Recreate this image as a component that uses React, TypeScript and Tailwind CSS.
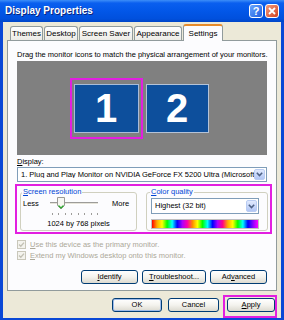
import React from "react";

const tabs = [
  { label: "Themes", w: "w-[33px]" },
  { label: "Desktop", w: "w-[34px]" },
  { label: "Screen Saver", w: "w-[54px]" },
  { label: "Appearance", w: "w-[48px]" },
];

function ComboArrow() {
  return (
    <div className="flex h-full w-[11px] shrink-0 items-center justify-center rounded-[2px] border border-[#B9CCF2] bg-linear-to-b from-[#E1EAFE] to-[#B1C6F5]">
      <svg width="7" height="5" viewBox="0 0 7 5">
        <path d="M0.8 0.8 L3.5 3.6 L6.2 0.8" fill="none" stroke="#4D6185" strokeWidth="1.5" />
      </svg>
    </div>
  );
}

function Combo({ text, className }: { text: string; className: string }) {
  return (
    <div className={`flex items-center border border-[#7F9DB9] bg-white py-px pl-[3px] pr-px ${className}`}>
      <span className="flex-1 overflow-hidden whitespace-nowrap">{text}</span>
      <ComboArrow />
    </div>
  );
}

function Button({ children, w, isDefault }: { children: React.ReactNode; w: string; isDefault?: boolean }) {
  return (
    <div
      className={`flex h-[14px] items-center justify-center rounded-[3px] border border-[#003C74] bg-linear-to-b from-white via-[#F4F3EE] to-[#DCDAD0] ${w} ${
        isDefault ? "shadow-[inset_0_0_0_1px_#9DBBEA]" : ""
      }`}
    >
      {children}
    </div>
  );
}

function Check({ children }: { children: React.ReactNode }) {
  return (
    <div className="flex h-[11px] items-center">
      <div className="flex h-[9px] w-[9px] items-center justify-center border border-[#C9C7BA] bg-[#F4F3EE]">
        <svg width="7" height="7" viewBox="0 0 7 7">
          <path d="M1 3.5 L2.8 5.3 L6 1.6" fill="none" stroke="#C2C0B4" strokeWidth="1.3" />
        </svg>
      </div>
      <span className="ml-[4px] text-[#ACA899]">{children}</span>
    </div>
  );
}

export default function App() {
  return (
    <div className="flex h-[320px] w-[284px] flex-col overflow-hidden bg-[#0A48D6] font-['Liberation_Sans',Arial,sans-serif] text-[7.5px] leading-none text-black">
      {/* Title bar */}
      <div className="flex h-[22px] shrink-0 items-center gap-[2px] bg-[linear-gradient(to_bottom,#3D8EF8_0%,#0A5FEF_14%,#0257E8_50%,#0050DD_85%,#0046C8_100%)] pl-[5px] pr-[5px]">
        <span className="flex-1 text-[10px] font-bold text-white [text-shadow:1px_1px_0_#0A237A]">Display Properties</span>
        <div className="flex h-[14px] w-[14px] items-center justify-center rounded-[3px] border border-white bg-linear-to-br from-[#6AA6FF] to-[#1D5CDF] text-[11px] font-bold text-white">
          ?
        </div>
        <div className="flex h-[14px] w-[14px] items-center justify-center rounded-[3px] border border-white bg-linear-to-br from-[#F29A7C] to-[#D23F1B]">
          <svg width="8" height="8" viewBox="0 0 8 8">
            <path d="M1 1 L7 7 M7 1 L1 7" stroke="white" strokeWidth="1.8" />
          </svg>
        </div>
      </div>

      {/* Body */}
      <div className="mx-[3px] mb-[3px] flex flex-1 flex-col bg-[#ECE9D8] px-[4px] pt-[2px]">
        {/* Tabs */}
        <div className="flex h-[16px] items-end gap-px pl-[3px]">
          {tabs.map((t) => (
            <div
              key={t.label}
              className={`flex h-[14px] items-center justify-center rounded-t-[3px] border border-b-0 border-[#919B9C] bg-linear-to-b from-white to-[#ECEBE6] text-[8px] ${t.w}`}
            >
              {t.label}
            </div>
          ))}
          <div className="relative z-10 -mb-px flex h-[17px] w-[40px] items-center justify-center rounded-t-[3px] border border-b-0 border-t-2 border-[#919B9C] border-t-[#E68B2C] bg-[#FCFCFE] text-[8px]">
            Settings
          </div>
        </div>

        {/* Panel */}
        <div className="flex h-[251px] flex-col border border-[#919B9C] bg-[#FCFCFE] pl-[9px] pr-[9px] pt-[9px]">
          <div className="h-[10px] whitespace-nowrap leading-[10px]">
            Drag the monitor icons to match the physical arrangement of your monitors.
          </div>

          {/* Monitor area */}
          <div className="mt-px flex h-[94px] items-center justify-center gap-[3px] bg-[#808080] pr-[6px]">
            <div className="border-2 border-[#E21FE0] px-[2px] py-[4px]">
              <div className="flex h-[49px] w-[65px] items-center justify-center border border-[#A9BCD8] bg-[#0D4F9C] text-[40px] font-bold text-white">
                1
              </div>
            </div>
            <div className="flex h-[49px] w-[63px] items-center justify-center border border-[#B4C3D8] bg-[#0D4F9C] text-[40px] font-bold text-white">
              2
            </div>
          </div>

          <div className="mt-[2px] h-[9px] leading-[9px]">
            <span className="underline">D</span>isplay:
          </div>
          <Combo className="mt-px h-[15px]" text="1. Plug and Play Monitor on NVIDIA GeForce FX 5200 Ultra (Microsoft" />

          {/* Highlighted settings */}
          <div className="-ml-[2px] -mr-[5px] mt-[2px] flex h-[50px] gap-[9px] border-2 border-[#E21FE0] pl-[3px] pr-[2px] pt-[2px]">
            <fieldset className="h-[43px] w-[117px] rounded-[3px] border border-[#D0D0BF]">
              <legend className="ml-px px-px leading-[8px] text-[#0046D5]">
                <span className="underline">S</span>creen resolution
              </legend>
              <div className="mt-px flex h-[13px] items-center pl-[2px]">
                <span className="w-[27px]">Less</span>
                <div className="relative h-[13px] w-[48px]">
                  <div className="absolute left-0 right-0 top-[5px] h-[3px] border-t border-b border-t-[#9D9C99] border-b-white bg-[#E6E4DA]" />
                  <svg className="absolute left-[7px] top-0" width="8" height="13" viewBox="0 0 8 13">
                    <path d="M0.5 0.5 H7.5 V8.5 L4 12 L0.5 8.5 Z" fill="#F7F7F2" stroke="#9A9A94" />
                    <path d="M1.5 8.5 L4 11 L6.5 8.5" fill="none" stroke="#2CAB2C" strokeWidth="1.2" />
                  </svg>
                </div>
                <span className="ml-[14px]">More</span>
              </div>
              <div className="ml-[31px] mt-[3px] flex w-[46px] justify-between">
                {[0, 1, 2, 3, 4, 5, 6, 7].map((i) => (
                  <div key={i} className="h-[2px] w-px bg-[#9D9C99]" />
                ))}
              </div>
              <div className="mt-[5px] text-center">1024 by 768 pixels</div>
            </fieldset>

            <fieldset className="h-[43px] flex-1 rounded-[3px] border border-[#D0D0BF]">
              <legend className="ml-[3px] px-px leading-[8px] text-[#0046D5]">
                <span className="underline">C</span>olor quality
              </legend>
              <Combo className="ml-[4px] mt-[2px] h-[16px] w-[108px]" text="Highest (32 bit)" />
              <div className="ml-[4px] mt-[5px] h-[10px] w-[108px] border border-[#C0C0C0] bg-[linear-gradient(to_right,#f00,#fa0,#ff0,#0f0,#0ff,#00f,#a0f,#f0a,#f80,#ff0,#0f0,#0ff,#00f,#a0f,#f08,#fa0,#ff0,#0f0,#0ff,#00f,#80f,#f0f)]" />
            </fieldset>
          </div>

          <div className="mt-[5px] flex flex-col">
            <Check>
              <span className="underline">U</span>se this device as the primary monitor.
            </Check>
            <Check>
              <span className="underline">E</span>xtend my Windows desktop onto this monitor.
            </Check>
          </div>

          <div className="mt-[9px] flex justify-end gap-[4px]">
            <Button w="w-[57px]">
              <span className="underline">I</span>dentify
            </Button>
            <Button w="w-[64px]">
              <span className="underline">T</span>roubleshoot...
            </Button>
            <Button w="w-[57px]">
              Ad<span className="underline">v</span>anced
            </Button>
          </div>
        </div>

        {/* Dialog buttons */}
        <div className="mt-[7px] flex items-start justify-end">
          <Button w="w-[50px]" isDefault>
            OK
          </Button>
          <div className="ml-[6px]">
            <Button w="w-[51px]">Cancel</Button>
          </div>
          <div className="-mt-[3px] ml-[4px] border-2 border-[#E21FE0] pb-[4px] pl-[2px] pt-px">
            <Button w="w-[48px]">
              <span className="underline">A</span>pply
            </Button>
          </div>
        </div>
      </div>
    </div>
  );
}
